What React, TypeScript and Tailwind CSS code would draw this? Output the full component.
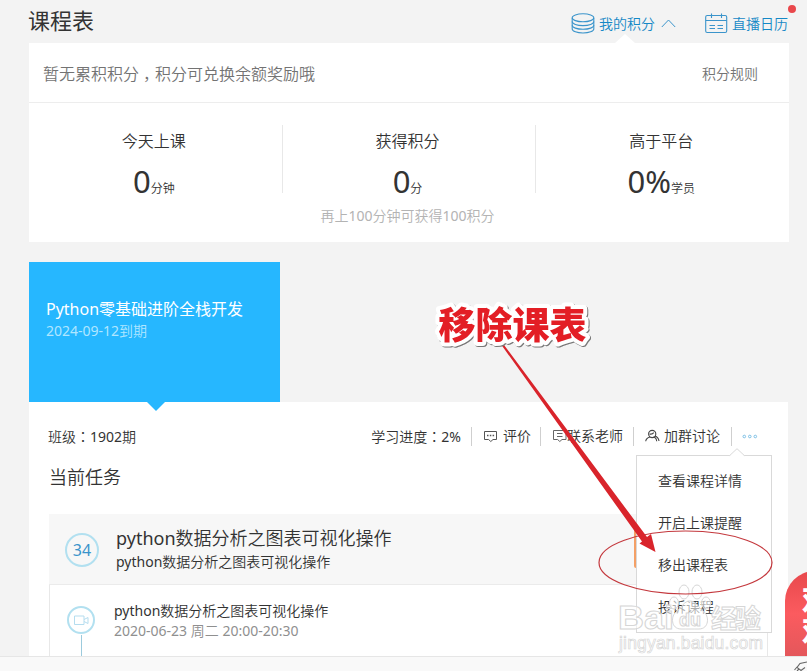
import React from 'react';

/* Sets Latin letters and digits in the regular weight beside the thinner Chinese text. */
function T({ children }: { children: string }) {
  return (
    <>
      {children.split(/([\x21-\x7e]+|：)/).map((part, i) =>
        part === '：' ? (
          <span key={i} className="font-['Noto_Sans_CJK_TC',sans-serif]">{part}</span>
        ) : i % 2 ? (
          <span key={i} className="font-normal">{part}</span>
        ) : (
          part
        ),
      )}
    </>
  );
}

function PointsIcon() {
  return (
    <svg width="24" height="21" viewBox="0 0 24 21" fill="none" stroke="#3a94cb" strokeWidth="1.1">
      <ellipse cx="12" cy="4.8" rx="10.8" ry="4" />
      <path d="M1.2 5v11c0 2.200 4.800 4 10.800 4s10.800-1.800 10.800-4V5" />
      <path d="M1.200 8.600c0 2.200 4.800 4 10.800 4s10.800-1.800 10.800-4M1.200 12.300c0 2.200 4.800 4 10.800 4s10.800-1.800 10.800-4" />
    </svg>
  );
}

function CalendarIcon() {
  return (
    <svg width="23" height="21" viewBox="0 0 23 21" fill="none" stroke="#3a94cb" strokeWidth="1.100">
      <rect x="0.700" y="2.500" width="21" height="17" rx="1.500" />
      <path d="M0.700 7.500h21M6.500 0.500v4.500M16.500 0.500v4.500M4.500 12.500h5.500M12.500 12.500h5.500M4.500 15.500h5.500M12.500 15.500h5.500" />
    </svg>
  );
}

function Stat({ label, value, unit, note }: { label: string; value: string; unit: string; note?: string }) {
  return (
    <div className="flex flex-1 flex-col items-center pr-[3px] whitespace-nowrap">
      <div className="mt-[6px] h-[24px] text-[16px] leading-[24px]">{label}</div>
      <div className="mt-[2px] flex h-[51px] items-baseline leading-[52px]">
        <span className="text-[31px] leading-[52px]"><T>{value}</T></span>
        <span className="text-[12px]">{unit}</span>
      </div>
      {note && <div className="text-[14px] leading-[20px] text-[#b3b3b3]"><T>{note}</T></div>}
    </div>
  );
}

function Divider() {
  return <div className="h-[19px] w-px bg-[#cfcfcf]" />;
}

const menu = ['查看课程详情', '开启上课提醒', '移出课程表', '投诉课程'];

export default function App() {
  return (
    <div className="relative flex h-[671px] w-[807px] flex-col overflow-hidden bg-[#f3f3f3] font-['Noto_Sans','Noto_Sans_CJK_SC',sans-serif] font-[350] text-[#333]">
      <header className="flex h-[43px] items-center pr-[19px] pl-[28px] whitespace-nowrap">
        <h1 className="flex-1 pb-[3px] text-[22px] leading-[32px] font-normal text-[#333]">课程表</h1>
        <div className="flex items-center pt-[4px] text-[14px] leading-[20px] text-[#1588c6]">
          <PointsIcon />
          <span className="ml-[4px]">我的积分</span>
          <svg className="ml-[6px]" width="15" height="9" viewBox="0 0 15 9" fill="none" stroke="#3a94cb">
            <path d="M0.800 8L7.500 1l6.700 7" />
          </svg>
          <span className="ml-[29px]"><CalendarIcon /></span>
          <span className="ml-[4px]">直播日历</span>
        </div>
      </header>

      <section className="relative ml-[29px] h-[199px] w-[760px] bg-white">
        <div className="absolute -top-[9px] left-[586px] h-0 w-0 border-x-[10px] border-b-[9px] border-x-transparent border-b-white" />
        <div className="flex h-[60px] items-center justify-between border-b border-[#ededed] pt-[2px] pr-[31px] pl-[14px]">
          <span className="text-[16px] text-[#737373]">暂无累积积分<span className="relative left-[4px]">，</span>积分可兑换余额奖励哦</span>
          <span className="text-[14px] text-[#737373]">积分规则</span>
        </div>
        <div className="flex pt-[20px]">
          <Stat label="今天上课" value="0" unit="分钟" />
          <div className="mt-[2px] h-[68px] w-px bg-[#e8e8e8]" />
          <Stat label="获得积分" value="0" unit="分" note="再上100分钟可获得100积分" />
          <div className="mt-[2px] h-[68px] w-px bg-[#e8e8e8]" />
          <Stat label="高于平台" value="0%" unit="学员" />
        </div>
      </section>

      <section className="relative mt-[20px] ml-[29px] h-[140px] w-[251px] bg-[#26b7ff] pt-[35px] pl-[17px] text-white">
        <div className="text-[16px] leading-[24px] font-normal">Python零基础进阶全栈开发</div>
        <div className="text-[14px] leading-[20px] text-[#b0e6ff]"><T>2024-09-12到期</T></div>
        <div className="absolute top-[140px] left-[118px] z-10 h-0 w-0 border-x-[9px] border-t-[9px] border-x-transparent border-t-[#26b7ff]" />
      </section>

      <section className="ml-[29px] flex h-[254px] w-[759px] flex-col overflow-hidden bg-white pr-[20px] pl-[20px]">
        <div className="mt-[24px] flex h-[20px] items-center pr-[10px] text-[14px] leading-[20px] whitespace-nowrap">
          <div className="-ml-px flex-1"><T>班级：1902期</T></div>
          <div className="mr-[10px]"><T>学习进度：2%</T></div>
          <Divider />
          <svg className="ml-[12px]" width="14" height="13" viewBox="0 0 14 13" fill="none" stroke="#555">
            <path d="M0.500 1.500h12v8H9l-2.200 2-2.200-2H0.500z" />
            <path d="M3 5.500h1.500M5.800 5.500h1.500M8.600 5.500h1.500" strokeWidth="1.500" />
          </svg>
          <span className="mr-[9px] ml-[5px]">评价</span>
          <Divider />
          <svg className="ml-[12px]" width="14" height="14" viewBox="0 0 14 14" fill="none" stroke="#666">
            <path d="M0.500 1.500h12.500v9H9l-2.200 2-2.200-2H0.500zM4 4.500h5.500M4 7.500h5.500" />
          </svg>
          <span className="mr-[10px]">联系老师</span>
          <Divider />
          <svg className="ml-[11px]" width="15" height="14" viewBox="0 0 15 14" fill="none" stroke="#444" strokeWidth="1.100">
            <circle cx="7.200" cy="5" r="3.600" />
            <path d="M5 8C2.500 8.700 1 10 0.700 12.300M8.500 8c2.300.5 3 2 3.200 4.300M10 7c2.500.8 3.600 2.300 4 5M4.500 5c1.800.4 3.300 0 4.200-1.400" />
          </svg>
          <span className="mr-[11px] ml-[4px]">加群讨论</span>
          <Divider />
          <svg className="ml-[10px]" width="16" height="5" viewBox="0 0 16 5" fill="none" stroke="#7cc0e6">
            <circle cx="2.300" cy="2.500" r="1.300" /><circle cx="7.800" cy="2.500" r="1.300" /><circle cx="13.300" cy="2.500" r="1.300" />
          </svg>
        </div>
        <h2 className="mt-[17px] h-[28px] text-[18px] leading-[28px]">当前任务</h2>
        <div className="mt-[23px] flex h-[71px] shrink-0 border-b border-[#ebebeb] bg-[#f7f7f7] pl-[16px]">
          <div className="mt-[19px] flex h-[34px] w-[34px] items-center justify-center rounded-full border-2 border-[#b2e0f0] text-[16px] font-normal text-[#3a94cb]">34</div>
          <div className="ml-[17px] flex-1 pt-[11px]">
            <div className="text-[18px] leading-[26px]"><T>python数据分析之图表可视化操作</T></div>
            <div className="text-[14px] leading-[22px]"><T>python数据分析之图表可视化操作</T></div>
          </div>
          <div className="mt-[14px] mr-[130px] h-[40px] w-[4px] rounded-sm bg-[#f4a066]" />
        </div>
        <div className="flex h-[80px] shrink-0 border-x border-[#e8e8e8] pl-[17px]">
          <div className="flex w-[28px] flex-col items-center pt-[21px]">
            <div className="flex h-[28px] w-[28px] shrink-0 items-center justify-center rounded-full border-2 border-[#b2e0f0]">
              <svg width="15" height="11" viewBox="0 0 15 11" fill="none" stroke="#b5ddef">
                <path d="M0.500 1h9.500v8.500H0.500zM10 4.500l4-2v6l-4-2" />
              </svg>
            </div>
            <div className="mt-px h-[40px] w-px bg-[#9ccbdd]" />
          </div>
          <div className="ml-[19px] pt-[16px] text-[14px] leading-[20px]">
            <div><T>python数据分析之图表可视化操作</T></div>
            <div className="text-[#8f8f8f]"><T>2020-06-23 周二 20:00-20:30</T></div>
          </div>
        </div>
      </section>

      <footer className="h-[15px] border-t border-[#e6e6e6] bg-[#f9f9f9]" />

      <div className="absolute top-[455px] left-[636px] h-[178px] w-[136px] border border-[#d9d9d9] bg-white pt-[4px] pl-[21px] text-[14px] leading-[42px]">
        <svg className="absolute -top-[8px] left-[92px]" width="16" height="9" viewBox="0 0 16 9">
          <path d="M0.500 8L8 0.700 15.500 8v1H0.500z" fill="#fff" />
          <path d="M0.500 7.700L8 0.700l7.500 7" fill="none" stroke="#d9d9d9" />
        </svg>
        {menu.map((m) => <div key={m}>{m}</div>)}
      </div>

      <div className="absolute top-[571px] left-[785px] h-[85px] w-[60px] overflow-hidden rounded-t-[30px] bg-gradient-to-b from-[#e8484c] via-[#fb5b5f] to-[#e4575b] pt-[13px] pl-[17px] text-[27px] leading-[31px] font-black text-white">
        <div>双</div>
        <div>双</div>
      </div>
      <div className="absolute top-[5px] left-[788px] h-[8px] w-[8px] rounded-full bg-[#e9474b]" />

      <svg className="absolute top-0 left-0" width="807" height="671" viewBox="0 0 807 671">
        <g fontFamily="'Liberation Sans','Noto Sans CJK SC',sans-serif" fontWeight="700" fill="#fff" fillOpacity="0.600" stroke="#d6d6d6" strokeWidth="1">
          <text x="618" y="629" fontSize="33" textLength="56" lengthAdjust="spacingAndGlyphs">Bai</text>
          <ellipse cx="674" cy="603" rx="4.500" ry="6" />
          <ellipse cx="684" cy="592" rx="5" ry="7" />
          <ellipse cx="697" cy="592" rx="5" ry="7" />
          <ellipse cx="706" cy="603" rx="4.500" ry="6" />
          <path d="M690 601c-6 0-8 6-13 10-7 5-6 18 4 18 5 0 13 0 18 0 10 0 11-13 4-18-5-4-7-10-13-10z" />
          <text x="679" y="626" fontSize="18">du</text>
          <text x="711" y="628" fontSize="26" textLength="50">经验</text>
          <text x="619" y="649" fontSize="17.500" textLength="144" strokeWidth="0.700" fontWeight="400">jingyan.baidu.com</text>
        </g>
        <ellipse cx="685.500" cy="562.500" rx="86.500" ry="31.500" fill="none" stroke="#c4383d" strokeWidth="1.200" />
        <path d="M501.500 345l1.800-1L647 537l4-3 4.500 18-16-8.500 2.500-2z" fill="#d9242b" />
        <text
          x="438.500"
          y="339"
          className="fill-[#e31e25] stroke-white stroke-[8px] font-['Noto_Sans_CJK_SC',sans-serif] text-[37px] font-black drop-shadow-[1px_1px_0_#777] [paint-order:stroke] [stroke-linejoin:round]"
        >
          移除课表
        </text>
        <path d="M807 662l-7 1.500-3 4 4 3 4-3M797 667l-2.500 3M799 669l-2 2" fill="none" stroke="#666" strokeWidth="1.100" />
      </svg>
    </div>
  );
}
